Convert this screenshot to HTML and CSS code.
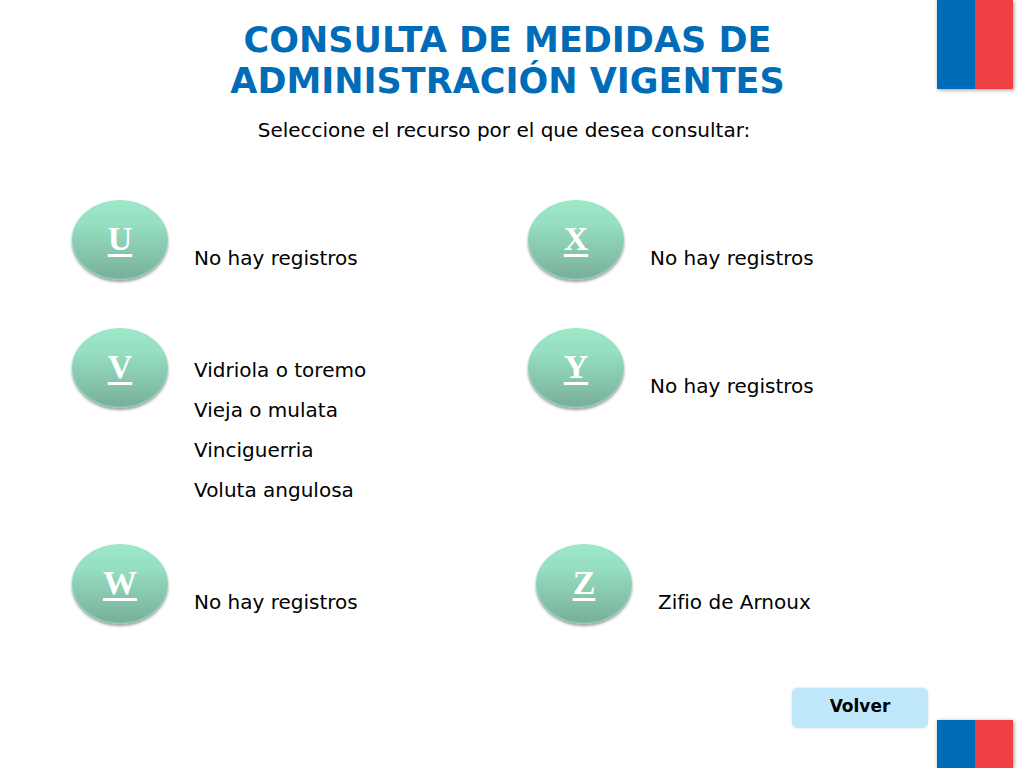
FILE: index.html
```html
<!DOCTYPE html>
<html lang="es">

<head>
    <meta charset="UTF-8">
    <meta name="viewport" content="width=device-width, initial-scale=1.0">
    <title>Consulta de medidas de administración vigentes</title>
    <link rel="stylesheet" href="styles.css">
</head>

<body>
    <header>
        <h1>CONSULTA DE MEDIDAS DE<br>ADMINISTRACIÓN VIGENTES</h1>
        <div class="flag flag-top"></div>
    </header>

    <main>
        <p class="intro">Seleccione el recurso por el que desea consultar:</p>

        <div class="letters">
            <section class="entry">
                <a class="letter" href="#u">U</a>
                <p class="single">No hay registros</p>
            </section>
            <section class="entry">
                <a class="letter" href="#x">X</a>
                <p class="single">No hay registros</p>
            </section>
            <section class="entry">
                <a class="letter" href="#v">V</a>
                <ul>
                    <li>Vidriola o toremo</li>
                    <li>Vieja o mulata</li>
                    <li>Vinciguerria</li>
                    <li>Voluta angulosa</li>
                </ul>
            </section>
            <section class="entry">
                <a class="letter" href="#y">Y</a>
                <p class="single">No hay registros</p>
            </section>
            <section class="entry">
                <a class="letter" href="#w">W</a>
                <p class="single">No hay registros</p>
            </section>
            <section class="entry entry-indent">
                <a class="letter" href="#z">Z</a>
                <p class="single">Zifio de Arnoux</p>
            </section>
        </div>
    </main>

    <footer>
        <button type="button">Volver</button>
        <div class="flag flag-bottom"></div>
    </footer>
</body>

</html>
```

FILE: styles.css
```css
* {
    box-sizing: border-box;
}

body {
    display: flex;
    flex-direction: column;
    min-height: 100vh;
    margin: 0;
    background-color: #ffffff;
    color: #000000;
    font-family: Verdana, "DejaVu Sans", sans-serif;
    font-size: 20px;
}

header {
    display: flex;
    align-items: flex-start;
    padding: 0 11px 0 78px;
}

h1 {
    flex: 1;
    margin: 0;
    padding-top: 20px;
    color: #006cb7;
    font-size: 35px;
    line-height: 41px;
    text-align: center;
}

/* blue and red halves */
.flag {
    flex: none;
    width: 76px;
    background: linear-gradient(to right, #006cb7 50%, #ef4144 50%);
    box-shadow: 1px 1px 4px rgba(0, 0, 0, 0.4);
}

.flag-top {
    height: 89px;
}

.flag-bottom {
    align-self: flex-end;
    height: 48px;
}

.intro {
    margin: 0;
    padding: 8px 16px 0 0;
    line-height: 40px;
    text-align: center;
}

.letters {
    display: grid;
    grid-template-columns: 1fr 1fr;
    row-gap: 34px;
    padding: 50px 40px 0 72px;
}

.entry {
    display: flex;
    align-items: flex-start;
    gap: 26px;
    min-height: 94px;
}

.entry-indent {
    padding-left: 8px;
}

.letter {
    flex: none;
    width: 96px;
    padding-bottom: 2px;
    border-radius: 50%;
    background: linear-gradient(#9ce8c8, #96dfc1 30%, #77ae98);
    box-shadow: 0 2px 3px rgba(0, 0, 0, 0.4), inset 0 -1px 1px #94d9bd;
    color: #ffffff;
    font-family: "Liberation Serif", serif;
    font-size: 34px;
    font-weight: bold;
    line-height: 78px;
    text-align: center;
    text-decoration-thickness: 3px;
    text-underline-offset: 4px;
}

.entry p,
.entry ul {
    margin: 0;
    padding: 22px 0 0;
    line-height: 40px;
    list-style: none;
}

.entry .single {
    padding-top: 38px;
}

footer {
    display: flex;
    align-items: flex-start;
    justify-content: flex-end;
    gap: 9px;
    height: 80px;
    margin-top: auto;
    padding-right: 11px;
}

button {
    width: 136px;
    height: 40px;
    padding: 0 0 4px;
    border: none;
    border-radius: 6px;
    background-color: #bfe9fb;
    box-shadow: 0 0 2px rgba(0, 0, 0, 0.2);
    color: #000000;
    font-family: inherit;
    font-size: 17px;
    font-weight: bold;
    cursor: pointer;
}
```
